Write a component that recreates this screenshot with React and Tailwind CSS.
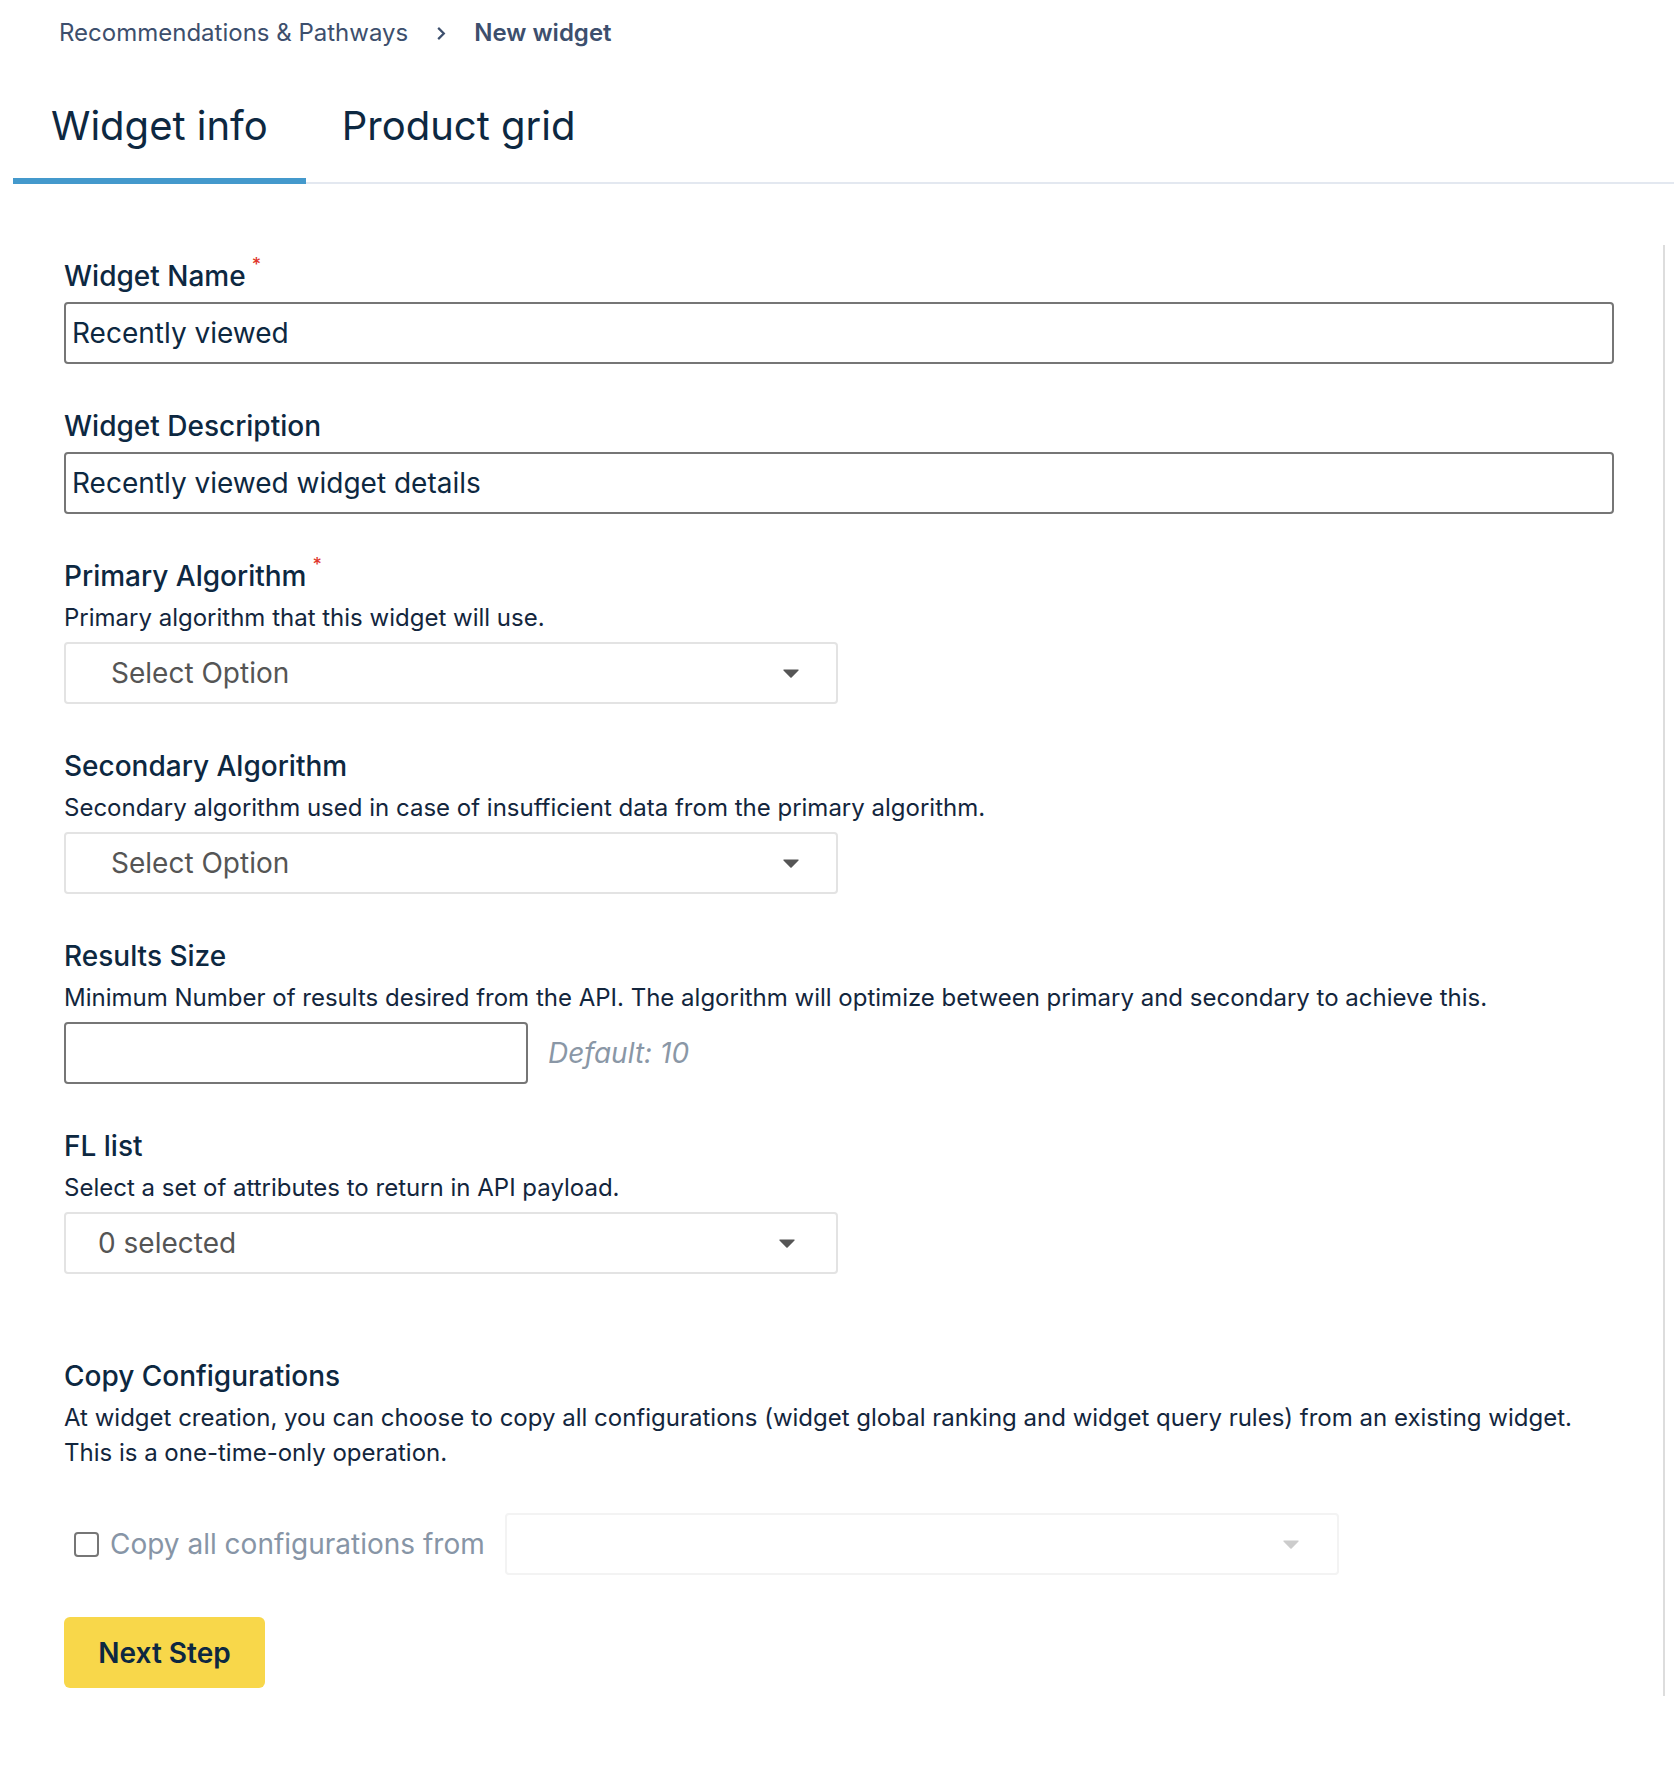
import React from 'react';

const Caret = ({ className }) => (
  <svg viewBox="0 0 16 9" className={className} fill="currentColor">
    <path d="M1 0.5h14c0.6 0 0.9 0.7 0.5 1.1L8.6 8.4c-0.3 0.3-0.9 0.3-1.2 0L0.5 1.6C0.1 1.2 0.4 0.5 1 0.5z" />
  </svg>
);

function Field({ label, required, hint, children, className = '' }) {
  return (
    <div className={className}>
      <div className="flex items-start text-[28px] leading-[32px] font-medium text-[#0d2841]">
        <span>{label}</span>
        {required && <span className="ml-[6px] -mt-[5px] text-[18px] leading-[20px] text-[#e0362c]">*</span>}
      </div>
      {hint && <p className="mt-[8px] text-[24px] leading-[35px] text-[#13263d]">{hint}</p>}
      <div className={hint ? 'mt-[7px]' : 'mt-[10px]'}>{children}</div>
    </div>
  );
}

function TextInput({ value, width = 'w-full' }) {
  return (
    <div className={`${width} h-[62px] rounded-[4px] border-2 border-[#767676] flex items-center px-[6px] text-[28px] text-[#0d2841]`}>
      {value}
    </div>
  );
}

function Select({ text, pad = 'pl-[45px]', caretPos = 'pr-[37px]' }) {
  return (
    <div className={`w-[774px] h-[62px] rounded-[4px] border-2 border-[#e3e3e3] flex items-center justify-between ${pad} ${caretPos} text-[28px] text-[#555555]`}>
      <span>{text}</span>
      <Caret className="w-[16px] h-[9px] text-[#555555]" />
    </div>
  );
}

export default function App() {
  return (
    <div className="min-h-[1769px] bg-white pl-[13px]" style={{ fontFamily: 'Inter, "Noto Sans", sans-serif' }}>
      <nav className="h-[66px] pl-[46px] flex items-center gap-[28px] text-[24px] text-[#3d4f6d]">
        <span>Recommendations &amp; Pathways</span>
        <svg viewBox="0 0 10 16" className="w-[10px] h-[15px]" fill="none" stroke="currentColor" strokeWidth="2.4">
          <path d="M2 2l6 6-6 6" />
        </svg>
        <span className="font-semibold">New widget</span>
      </nav>

      <div className="flex border-b-2 border-[#e3e8f0]">
        <div className="px-[38px] pt-[36px] pb-[28px] border-b-[6px] border-[#4499cc] -mb-[2px] text-[40px] leading-[48px] text-[#0d2841]">
          Widget info
        </div>
        <div className="px-[36px] pt-[36px] pb-[28px] text-[40px] leading-[48px] text-[#0d2841]">
          Product grid
        </div>
      </div>

      <div className="mt-[61px] mr-[9px] border-r-2 border-[#dddddd] pl-[51px] pr-[49px] pt-[15px] pb-[8px]">
        <Field label="Widget Name" required>
          <TextInput value="Recently viewed" />
        </Field>

        <Field label="Widget Description" className="mt-[46px]">
          <TextInput value="Recently viewed widget details" />
        </Field>

        <Field label="Primary Algorithm" required hint="Primary algorithm that this widget will use." className="mt-[46px]">
          <Select text="Select Option" />
        </Field>

        <Field label="Secondary Algorithm" hint="Secondary algorithm used in case of insufficient data from the primary algorithm." className="mt-[46px]">
          <Select text="Select Option" />
        </Field>

        <Field label="Results Size" hint="Minimum Number of results desired from the API. The algorithm will optimize between primary and secondary to achieve this." className="mt-[46px]">
          <div className="flex items-center gap-[20px]">
            <TextInput value="" width="w-[464px]" />
            <span className="text-[28px] italic text-[#8a97a6]">Default: 10</span>
          </div>
        </Field>

        <Field label="FL list" hint="Select a set of attributes to return in API payload." className="mt-[46px]">
          <Select text="0 selected" pad="pl-[32px]" caretPos="pr-[41px]" />
        </Field>

        <div className="mt-[86px]">
          <div className="text-[28px] leading-[32px] font-medium text-[#0d2841]">Copy Configurations</div>
          <p className="mt-[8px] text-[24px] leading-[35px] text-[#13263d]">
            At widget creation, you can choose to copy all configurations (widget global ranking and widget query rules) from an existing widget.
            <br />
            This is a one-time-only operation.
          </p>
        </div>

        <div className="mt-[43px] flex items-center">
          <div className="ml-[10px] w-[25px] h-[25px] rounded-[4px] border-2 border-[#767676]" />
          <span className="ml-[11px] text-[28px] text-[#8795a6]">Copy all configurations from</span>
          <div className="ml-[20px] w-[834px] h-[62px] rounded-[4px] border-2 border-[#f3f3f3] flex items-center justify-end pr-[38px]">
            <Caret className="w-[16px] h-[9px] text-[#cccccc]" />
          </div>
        </div>

        <button className="mt-[42px] h-[71px] w-[201px] rounded-[6px] bg-[#f8d74a] text-[28px] font-semibold text-[#0d2841]">
          Next Step
        </button>
      </div>
    </div>
  );
}
